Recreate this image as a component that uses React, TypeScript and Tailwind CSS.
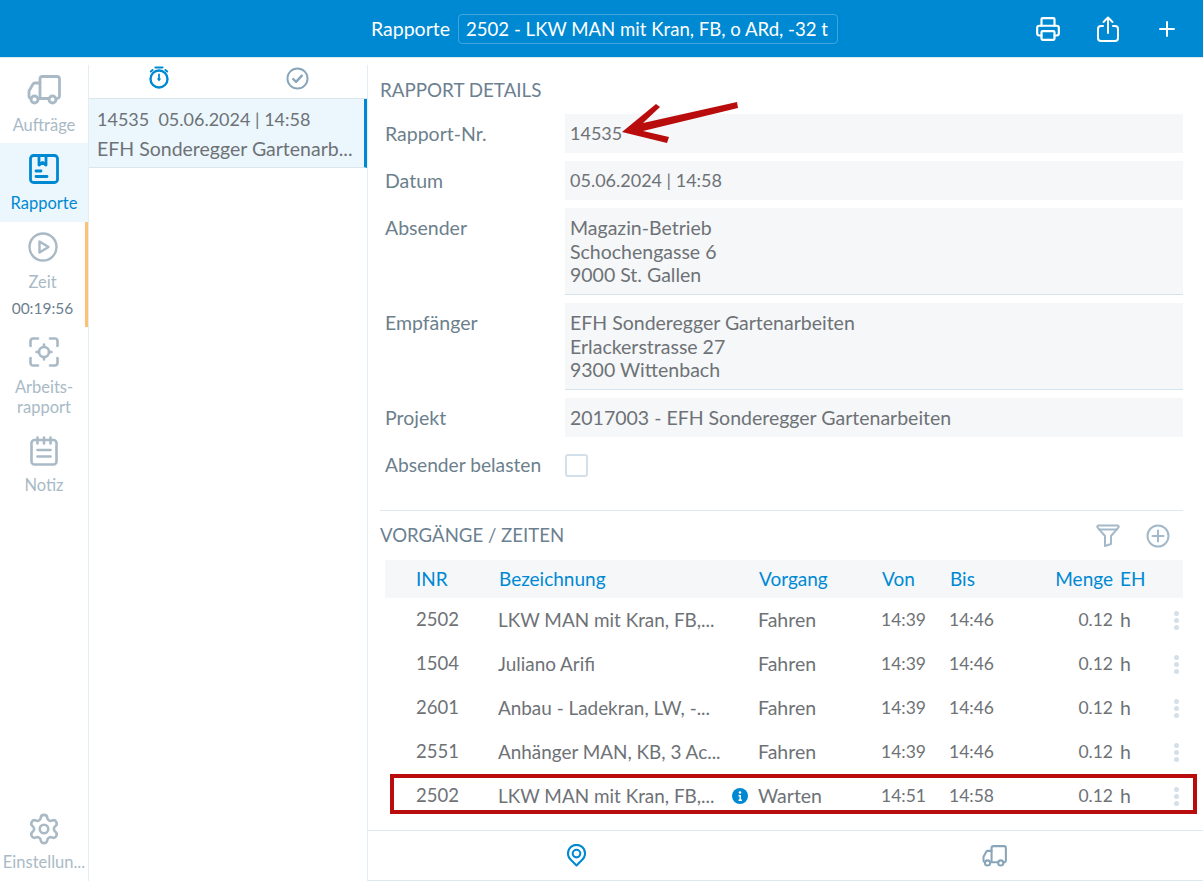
import { Printer, Plus, Settings } from 'lucide-react';

const rows = [
  { inr: '2502', name: 'LKW MAN mit Kran, FB,...', op: 'Fahren', from: '14:39', to: '14:46', qty: '0.12', unit: 'h' },
  { inr: '1504', name: 'Juliano Arifi', op: 'Fahren', from: '14:39', to: '14:46', qty: '0.12', unit: 'h' },
  { inr: '2601', name: 'Anbau - Ladekran, LW, -...', op: 'Fahren', from: '14:39', to: '14:46', qty: '0.12', unit: 'h' },
  { inr: '2551', name: 'Anhänger MAN, KB, 3 Ac...', op: 'Fahren', from: '14:39', to: '14:46', qty: '0.12', unit: 'h' },
  { inr: '2502', name: 'LKW MAN mit Kran, FB,...', op: 'Warten', from: '14:51', to: '14:58', qty: '0.12', unit: 'h', info: true },
  // next row is scrolled away, only its menu dots peek out above the footer
  { inr: '', name: '', op: '', from: '', to: '', qty: '', unit: '' },
];

const TruckIcon = ({ className }: { className: string }) => (
  <svg viewBox="0 0 34 30" fill="none" stroke="currentColor" strokeWidth="2.800" strokeLinejoin="round" strokeLinecap="round" className={className}>
    <path d="M13 23V4a2.500 2.500 0 0 1 2.500-2.500H30A2.500 2.500 0 0 1 32.500 4v17a2.500 2.500 0 0 1-2.500 2.500h-1" />
    <path d="M13 8H8a2.500 2.500 0 0 0-2.200 1.300L2 16v5a2.500 2.500 0 0 0 2 2.400" />
    <path d="M12 23.500h10" />
    <circle cx="7.500" cy="24.500" r="3.500" />
    <circle cx="25.500" cy="24.500" r="3.500" />
  </svg>
);

const ReportIcon = ({ className }: { className: string }) => (
  <svg viewBox="0 0 30 30" fill="none" stroke="currentColor" strokeWidth="2.800" strokeLinecap="round" strokeLinejoin="round" className={className}>
    <rect x="1.500" y="1.500" width="27" height="27" rx="3" />
    <path d="M10 2v9l3.500-2.500L17 11V2" />
    <path d="M7 17h5M7 22.500h11" />
  </svg>
);

const PlayIcon = ({ className }: { className: string }) => (
  <svg viewBox="0 0 30 30" fill="none" stroke="currentColor" strokeWidth="2.400" strokeLinejoin="round" className={className}>
    <circle cx="15" cy="15" r="13.500" />
    <path d="M11.500 9.500v11l9-5.500z" />
  </svg>
);

const FocusIcon = ({ className }: { className: string }) => (
  <svg viewBox="0 0 30 30" fill="none" stroke="currentColor" strokeWidth="2.600" strokeLinecap="round" strokeLinejoin="round" className={className}>
    <path d="M9 1.500H4A2.500 2.500 0 0 0 1.500 4v5M21 1.500h5A2.500 2.500 0 0 1 28.500 4v5M9 28.500H4A2.500 2.500 0 0 1 1.500 26v-5M21 28.500h5a2.500 2.500 0 0 0 2.500-2.500v-5" />
    <circle cx="15" cy="15" r="5" />
    <path d="M15 7.500V10M15 20v2.500M7.500 15H10M20 15h2.500" />
  </svg>
);

const NoteIcon = ({ className }: { className: string }) => (
  <svg viewBox="0 0 28 30" fill="none" stroke="currentColor" strokeWidth="2.600" strokeLinecap="round" strokeLinejoin="round" className={className}>
    <rect x="1.500" y="4" width="25" height="24.500" rx="3" />
    <path d="M7.500 1.500v6M14 1.500v6M20.500 1.500v6M7.500 14h13M7.500 20.500h13" />
  </svg>
);

const ShareIcon = ({ className }: { className: string }) => (
  <svg viewBox="0 0 22 26" fill="none" stroke="currentColor" strokeWidth="2" strokeLinecap="round" strokeLinejoin="round" className={className}>
    <path d="M6 10H4a3 3 0 0 0-3 3v9a3 3 0 0 0 3 3h14a3 3 0 0 0 3-3v-9a3 3 0 0 0-3-3h-2" />
    <path d="M11 17V2M6.500 6L11 1.500 15.500 6" />
  </svg>
);

const StopwatchIcon = ({ className }: { className: string }) => (
  <svg viewBox="0 0 20 23" fill="none" stroke="currentColor" strokeLinecap="round" className={className}>
    <circle cx="10" cy="13" r="8.500" strokeWidth="2.400" />
    <path d="M6.500 1.500h7" strokeWidth="2.200" />
    <path d="M1.800 5.500l1.800-1.500M18.200 5.500l-1.800-1.500" strokeWidth="2" />
    <path d="M10 8.500v4.500" strokeWidth="1.800" />
    <path d="M7.800 12.500h4.400L10 15.500z" fill="currentColor" stroke="none" />
  </svg>
);

const CheckIcon = ({ className }: { className: string }) => (
  <svg viewBox="0 0 24 24" fill="none" stroke="currentColor" strokeWidth="2" strokeLinecap="round" strokeLinejoin="round" className={className}>
    <circle cx="12" cy="12" r="10.500" />
    <path d="M7.500 12.500l3 3 6-6.500" strokeWidth="2.400" />
  </svg>
);

const FilterIcon = ({ className }: { className: string }) => (
  <svg viewBox="0 0 24 23" fill="none" stroke="currentColor" strokeWidth="2" strokeLinecap="round" strokeLinejoin="round" className={className}>
    <path d="M2.500 1.500h19a1.200 1.200 0 0 1 1 1.800L15 12v8l-6 2V12L1.500 3.300a1.200 1.200 0 0 1 1-1.800z" />
    <path d="M3 5.500h18" />
  </svg>
);

const AddIcon = ({ className }: { className: string }) => (
  <svg viewBox="0 0 24 24" fill="none" stroke="currentColor" strokeWidth="2" strokeLinecap="round" className={className}>
    <circle cx="12" cy="12" r="10.500" />
    <path d="M12 6.500v11M6.500 12h11" />
  </svg>
);

const PinIcon = ({ className }: { className: string }) => (
  <svg viewBox="0 0 20 24" fill="none" stroke="currentColor" strokeWidth="2.200" strokeLinejoin="round" className={className}>
    <path d="M10 22.500l-6.500-6.500a9 9 0 1 1 13 0z" />
    <circle cx="10" cy="10" r="4" />
  </svg>
);

const InfoIcon = ({ className }: { className: string }) => (
  <svg viewBox="0 0 16 16" className={className}>
    <circle cx="8" cy="8" r="8" fill="#0089d3" />
    <circle cx="8" cy="4.500" r="1.300" fill="#fff" />
    <path d="M6.500 7h2.500v4.500h1V13H6.500v-1.500h1V8.500h-1z" fill="#fff" />
  </svg>
);

const Dots = () => (
  <div className="flex flex-col items-center gap-[2px]">
    <span className="w-[5px] h-[5px] rounded-full bg-[#d3e0e9]" />
    <span className="w-[5px] h-[5px] rounded-full bg-[#d3e0e9]" />
    <span className="w-[5px] h-[5px] rounded-full bg-[#d3e0e9]" />
  </div>
);

const Field = ({ label, lines, underline, numeric }: { label: string; lines: string[]; underline?: boolean; numeric?: boolean }) => (
  <div className="flex">
    <div className="w-[185px] pl-[5px] pt-[8px] leading-[23.500px] text-[#6c7f8c]">{label}</div>
    <div className={`flex-1 bg-[#f5f7f9] px-[5px] pt-[8px] pb-[7.500px] leading-[23.500px] text-[#6e7276] ${numeric ? 'text-[18px]' : ''} ${underline ? 'border-b border-[#d5e3ec]' : ''}`}>
      {lines.map(l => <div key={l}>{l}</div>)}
    </div>
  </div>
);

const NavItem = ({ icon, label, time, active }: { icon: React.ReactNode; label: React.ReactNode; time?: string; active?: boolean }) => (
  <div className={`flex flex-col items-center ${active ? 'bg-[#ebf7fd] text-[#0089d3]' : 'text-[#a9bac6]'}`}>
    {icon}
    <div className="text-[16.500px] leading-[20px] text-center whitespace-nowrap">{label}</div>
    {time && <div className="text-[15.500px] leading-[20px] mt-[6px] text-[#6c8090]">{time}</div>}
  </div>
);

const App = () => {
  return (
    <div className="relative w-[1203px] h-[881px] overflow-hidden flex flex-col bg-white text-[19.500px] font-['Lato','Liberation_Sans',sans-serif]">
      <header className="h-[58px] shrink-0 bg-[#0089d3] border-b border-[#d9e6ee] flex items-center text-white">
        <div className="ml-[371px] mr-[8px]">Rapporte</div>
        <div className="w-[380px] h-[30px] border border-[#3fa6de] rounded-[4px] px-[7px] leading-[28px] overflow-hidden whitespace-nowrap text-[18.600px]">2502 - LKW MAN mit Kran, FB, o ARd, -32 t</div>
        <div className="ml-auto flex items-center gap-[36px] mr-[24px]">
          <Printer className="w-[26px] h-[26px]" strokeWidth={2} />
          <ShareIcon className="w-[22px] h-[26px]" />
          <Plus className="w-[24px] h-[24px]" strokeWidth={2} />
        </div>
      </header>

      <div className="flex-1 flex min-h-0 pt-[7px]">
        <aside className="w-[89px] shrink-0 border-r border-[#e2edf4] flex flex-col">
          <NavItem icon={<TruckIcon className="w-[34px] h-[30px] mt-[10px] mb-[10px]" />} label="Aufträge" />
          <div className="h-[8px]" />
          <NavItem active icon={<ReportIcon className="w-[30px] h-[30px] mt-[11px] mb-[9px]" />} label="Rapporte" />
          <div className="h-[9px] bg-[#ebf7fd]" />
          <div className="border-r-[3px] border-[#fcc177] h-[105px]">
            <NavItem icon={<PlayIcon className="w-[30px] h-[30px] mt-[10px] mb-[10px]" />} label="Zeit" time="00:19:56" />
          </div>
          <NavItem icon={<FocusIcon className="w-[30px] h-[30px] mt-[10px] mb-[10px]" />} label={<>Arbeits-<br />rapport</>} />
          <NavItem icon={<NoteIcon className="w-[28px] h-[30px] mt-[19px] mb-[9px]" />} label="Notiz" />
          <div className="mt-auto mb-[9px]">
            <NavItem icon={<Settings className="w-[34px] h-[34px] mb-[6px]" strokeWidth={1.800} />} label="Einstellun..." />
          </div>
        </aside>

        <section className="w-[279px] shrink-0 border-r border-[#e2edf4]">
          <div className="h-[34px] flex border-b border-[#d9e6ee]">
            <div className="w-[139px] flex justify-center pt-[1px] text-[#0089d3]"><StopwatchIcon className="w-[20px] h-[23px]" /></div>
            <div className="w-[139px] flex justify-center pt-[2px] text-[#88a5ba]"><CheckIcon className="w-[23px] h-[23px]" /></div>
          </div>
          <div className="h-[69px] bg-[#ebf7fd] border-r-[3px] border-b border-b-[#d9e6ee] border-r-[#0089d3] pl-[8px] pt-[6px] leading-[29px] text-[#6e7276] whitespace-nowrap">
            <div className="text-[18px]">14535&nbsp; 05.06.2024 | 14:58</div>
            <div>EFH Sonderegger Gartenarb...</div>
          </div>
        </section>

        <main className="flex-1 min-w-0 flex flex-col">
          <div className="flex-1 min-h-0 overflow-hidden pl-[12px] pr-[20px]">
            <h2 className="text-[#6c8090] text-[18.800px] leading-[24px] pt-[13px] pb-[12px]">RAPPORT DETAILS</h2>
            <div className="flex flex-col gap-[8px]">
              <Field numeric label="Rapport-Nr." lines={['14535']} />
              <Field numeric label="Datum" lines={['05.06.2024 | 14:58']} />
              <Field label="Absender" lines={['Magazin-Betrieb', 'Schochengasse 6', '9000 St. Gallen']} underline />
              <Field label="Empfänger" lines={['EFH Sonderegger Gartenarbeiten', 'Erlackerstrasse 27', '9300 Wittenbach']} underline />
              <Field label="Projekt" lines={['2017003 - EFH Sonderegger Gartenarbeiten']} />
              <div className="flex items-center mt-[9px] h-[23px]">
                <div className="w-[185px] pl-[5px] text-[#6c7f8c] text-[19.200px]">Absender belasten</div>
                <div className="w-[23px] h-[23px] border-2 border-[#d3e0e9] rounded-[3px]" />
              </div>
            </div>
            <div className="mt-[33px] border-t border-[#dde9f1] h-[50px] flex items-center">
              <h2 className="text-[#6c8090] text-[18.600px]">VORGÄNGE / ZEITEN</h2>
              <div className="ml-auto flex items-center gap-[26px] mr-[13px] text-[#a3b9c9]">
                <FilterIcon className="w-[24px] h-[23px]" />
                <AddIcon className="w-[24px] h-[24px]" />
              </div>
            </div>
            <div className="ml-[5px]">
              <div className="grid grid-cols-[113px_260px_123px_68px_80px_84px_63px] h-[38px] items-center bg-[#f5f7f9] text-[#0089d3] text-[19px]">
                <div className="pl-[31px]">INR</div>
                <div className="pl-px">Bezeichnung</div>
                <div className="pl-px">Vorgang</div>
                <div className="pl-px">Von</div>
                <div className="pl-px">Bis</div>
                <div className="text-right">Menge</div>
                <div className="pl-[7px]">EH</div>
              </div>
              {rows.map((r, i) => (
                <div key={i} className="grid grid-cols-[113px_260px_123px_68px_80px_84px_55px_16px] h-[44px] items-center text-[#6e7276] whitespace-nowrap">
                  <div className="pl-[31px] text-[18.500px]">{r.inr}</div>
                  <div className="flex items-center justify-between pr-[10px] text-[18.900px]">
                    <span>{r.name}</span>
                    {r.info && <InfoIcon className="w-[16px] h-[16px]" />}
                  </div>
                  <div>{r.op}</div>
                  <div className="text-[17.500px]">{r.from}</div>
                  <div className="text-[17.500px]">{r.to}</div>
                  <div className="text-right text-[17.500px]">{r.qty}</div>
                  <div className="pl-[7px]">{r.unit}</div>
                  <Dots />
                </div>
              ))}
            </div>
          </div>
          <div className="h-[51px] shrink-0 border-t border-b border-[#dde9f1] flex items-center">
            <div className="flex-1 flex justify-center text-[#0089d3]"><PinIcon className="w-[19px] h-[23px]" /></div>
            <div className="flex-1 flex justify-center text-[#88a5ba]"><TruckIcon className="w-[25px] h-[22px]" /></div>
          </div>
        </main>
      </div>

      <div className="absolute left-[390px] top-[774px] w-[807px] h-[40px] border-[4px] border-[#b90d0d]" />
      <svg viewBox="0 0 120 50" className="absolute left-[620px] top-[100px] w-[120px] h-[50px]" fill="#b90d0d">
        <path d="M2 32L36 4l4 3-17 16L117 2l1 6-95 23 26 6-2 6z" />
      </svg>
    </div>
  );
};

export default App;
